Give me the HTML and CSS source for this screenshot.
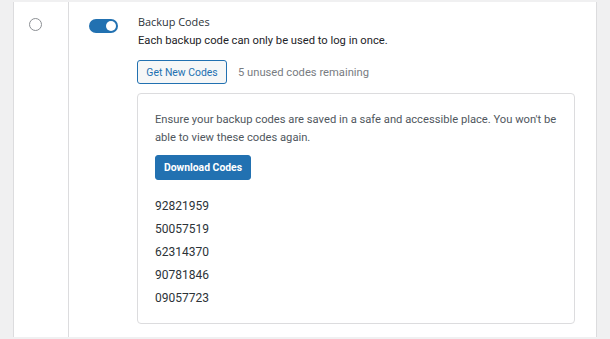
FILE: index.html
```html
<!DOCTYPE html>
<html>
<head>
<meta charset="utf-8">
<link rel="stylesheet" href="styles.css">
</head>
<body>
<div class="panel">
  <div class="col-select">
    <span class="radio"></span>
  </div>
  <div class="col-main">
    <div class="toggle"><span class="knob"></span></div>
    <div class="content">
      <div class="title">Backup Codes</div>
      <div class="desc">Each backup code can only be used to log in once.</div>
      <div class="actions">
        <button class="btn-secondary">Get New Codes</button>
        <span class="remaining">5 unused codes remaining</span>
      </div>
      <div class="codes-box">
        <p class="notice">Ensure your backup codes are saved in a safe and accessible place. You won't be able to view these codes again.</p>
        <button class="btn-primary">Download Codes</button>
        <ol class="codes">
          <li>92821959</li>
          <li>50057519</li>
          <li>62314370</li>
          <li>90781846</li>
          <li>09057723</li>
        </ol>
      </div>
    </div>
  </div>
</div>
</body>
</html>
```
FILE: styles.css
```css
html, body {
  margin: 0;
  padding: 0;
  background: #f0f0f1;
  font-family: Roboto, "Liberation Sans", sans-serif;
  color: #1d2327;
}
body {
  padding: 2px 13px 2px 13px;
  height: 339px;
  box-sizing: border-box;
}
.panel {
  display: flex;
  height: 335px;
  background: #fff;
  border-left: 1px solid #dcdcde;
  border-right: 1px solid #dcdcde;
}
.col-select {
  width: 55px;
  border-right: 1px solid #dcdcde;
  display: flex;
  align-items: flex-start;
  padding-top: 16px;
  padding-left: 15px;
  box-sizing: border-box;
}
.radio {
  width: 11px;
  height: 11px;
  border: 1px solid #8c8f94;
  border-radius: 50%;
}
.col-main {
  flex: 1;
  display: flex;
  align-items: flex-start;
  padding-left: 20px;
  padding-top: 17px;
}
.toggle {
  width: 29px;
  height: 14px;
  border-radius: 7px;
  background: #2271b1;
  position: relative;
  flex: none;
}
.knob {
  position: absolute;
  right: 2px;
  top: 2px;
  width: 10px;
  height: 10px;
  border-radius: 50%;
  background: #fff;
}
.content {
  margin-left: 19px;
  margin-top: -5px;
  flex: 1;
  margin-right: 21px;
}
.title {
  font-family: "Open Sans", Roboto, sans-serif;
  font-size: 10.9px;
  line-height: 16px;
  margin-left: 1px;
  color: #2c3338;
}
.desc {
  font-size: 11.2px;
  line-height: 16px;
  margin-top: 3px;
  margin-left: 1px;
}
.actions {
  display: flex;
  align-items: center;
  height: 24px;
  margin-top: 11px;
}
.btn-secondary {
  font-family: inherit;
  font-size: 10.4px;
  height: 24px;
  width: 90px;
  padding: 0;
  background: #f6f7f7;
  color: #2271b1;
  border: 1px solid #2271b1;
  border-radius: 3px;
  white-space: nowrap;
}
.remaining {
  margin-left: 11px;
  font-size: 11.2px;
  color: #787c82;
}
.codes-box {
  margin-top: 9px;
  border: 1px solid #dcdcde;
  border-radius: 4px;
  height: 231px;
  box-sizing: border-box;
  padding: 17px 17px 0 17px;
}
.notice {
  margin: 0;
  font-size: 11.2px;
  line-height: 18px;
  color: #50575e;
}
.btn-primary {
  margin-top: 8px;
  font-family: inherit;
  font-size: 10.4px;
  font-weight: bold;
  height: 25px;
  width: 96px;
  background: #2271b1;
  color: #fff;
  border: 1px solid #2271b1;
  border-radius: 3px;
  padding: 0;
}
.codes {
  list-style: none;
  margin: 18px 0 0 0;
  padding: 0;
}
.codes li {
  font-size: 12px;
  line-height: 16px;
  height: 23px;
  color: #2c3338;
}
```
